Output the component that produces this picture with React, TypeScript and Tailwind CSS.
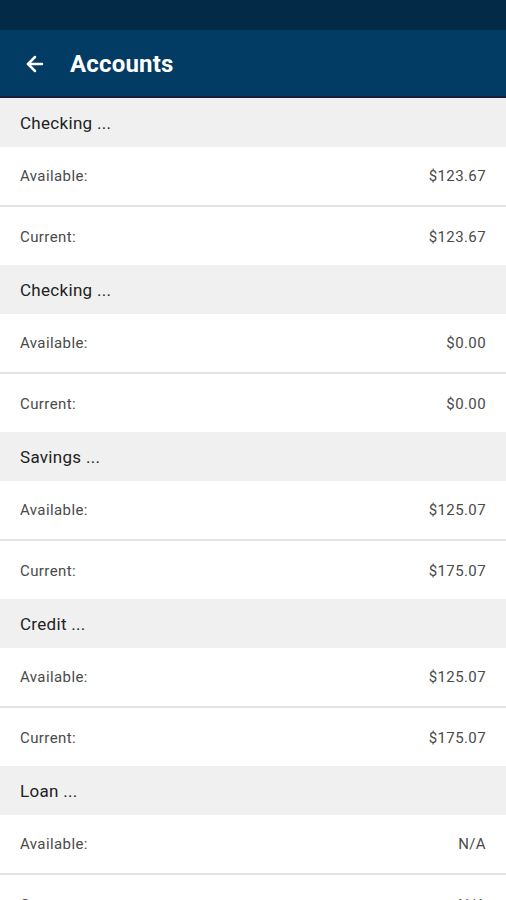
import { ArrowLeft } from 'lucide-react'

type Account = {
  name: string
  available: string
  current: string
}

const accounts: Account[] = [
  { name: 'Checking ...', available: '$123.67', current: '$123.67' },
  { name: 'Checking ...', available: '$0.00', current: '$0.00' },
  { name: 'Savings ...', available: '$125.07', current: '$175.07' },
  { name: 'Credit ...', available: '$125.07', current: '$175.07' },
  { name: 'Loan ...', available: 'N/A', current: 'N/A' },
]

function BalanceRow({ label, value, divider }: { label: string; value: string; divider?: boolean }) {
  return (
    <div
      className={`flex items-center justify-between px-5 bg-white ${
        divider ? 'h-[60px] pt-[1px] border-b-2 border-[#e3e3e3]' : 'h-[58px] pt-[2px]'
      }`}
    >
      <span className="text-[15px] tracking-[0.4px] text-[#4a4a4a]">{label}</span>
      <span className="text-[15px] tracking-[0.4px] text-[#4a4a4a]">{value}</span>
    </div>
  )
}

export default function App() {
  return (
    <div className="w-[506px] h-[900px] overflow-hidden bg-white font-['Roboto','Liberation_Sans',sans-serif]">
      {/* Status bar */}
      <div className="h-[30px] bg-[#032b47]" />

      {/* App bar */}
      <header className="h-[68px] bg-[#023c65] border-b-2 border-[#1c1d3a] flex items-center pl-[23px] pt-[2px]">
        <ArrowLeft className="w-6 h-6 text-white" strokeWidth={2.5} />
        <h1 className="ml-[23px] text-[24px] font-bold text-white tracking-[0.2px]">Accounts</h1>
      </header>

      {/* Account list */}
      <div className="flex flex-col">
        {accounts.map((acc, i) => (
          <div key={i} className="flex flex-col">
            <div className="h-[49px] bg-[#f0f0f0] flex items-center px-5 pt-[2px]">
              <span className="text-[17px] tracking-[0.3px] text-[#222]">{acc.name}</span>
            </div>
            <BalanceRow label="Available:" value={acc.available} divider />
            <BalanceRow label="Current:" value={acc.current} />
          </div>
        ))}
      </div>
    </div>
  )
}
